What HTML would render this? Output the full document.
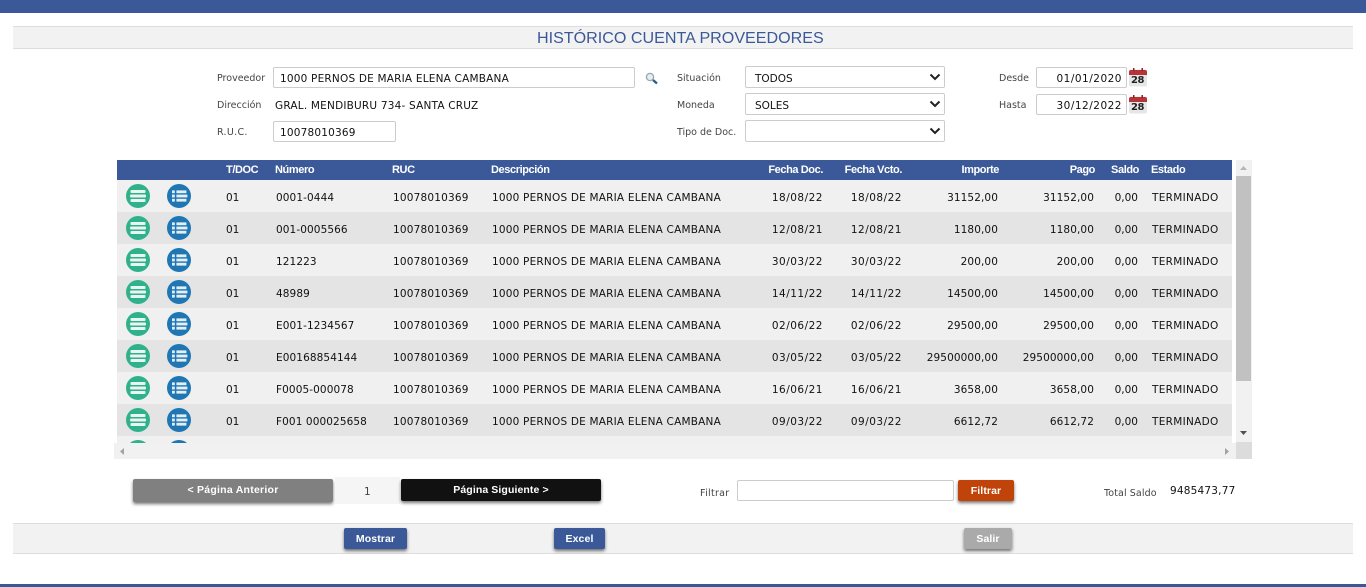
<!DOCTYPE html>
<html lang="es"><head><meta charset="utf-8"><title>Histórico Cuenta Proveedores</title>
<style>
html,body{margin:0;padding:0;background:#fff}
body{position:relative;width:1366px;height:587px;overflow:hidden;font-family:"DejaVu Sans","Liberation Sans",sans-serif;font-size:10.5px;color:#111}
div,span,svg{position:absolute;box-sizing:border-box}
span{white-space:nowrap;line-height:14px}
.bar{left:0;width:1366px;background:#3b5998}
.band{left:13px;width:1340px;background:#f2f2f2;border-top:1px solid #ddd;border-bottom:1px solid #ddd}
.lb{color:#444;font-size:9.5px}
.ls{letter-spacing:.2px}
.inp{background:#fff;border:1px solid #ccc;border-radius:2px}
.sel{background:#fff;border:1px solid #ccc;border-radius:2px;left:745px;width:200px;height:22px}
.chev{left:929px;width:12px;height:8px}
.r{left:0;width:1232px;height:32px;overflow:hidden}
.r span{top:11px}
.o{background:#f0f0f0}.e{background:#e4e4e4}
.a{left:226px}.b{left:276px;letter-spacing:.1px}.c{left:393px;letter-spacing:.2px}.d{left:492px;letter-spacing:.2px}
.f{right:409px;letter-spacing:.5px}.g{right:330px;letter-spacing:.5px}.h{right:234px;letter-spacing:.1px}.i{right:138px;letter-spacing:.1px}.j{right:94px}.k{left:1152px;letter-spacing:.3px}
.r .ic1{left:126px;top:4px;width:24px;height:24px}.r .ic2{left:167px;top:4px;width:24px;height:24px}
.th{color:#fff;font:bold 11px "Liberation Sans",sans-serif;top:163px;letter-spacing:-.4px;line-height:14px}
.btn{color:#fff;font:bold 10.5px/23px "Liberation Sans",sans-serif;text-align:center;box-shadow:0 2px 3px rgba(0,0,0,.55);border-radius:2px;letter-spacing:.1px}
.cn{font:bold 10px/11px "DejaVu Sans",sans-serif;letter-spacing:-.4px;color:#222;left:1131px}
</style></head><body>
<svg width="0" height="0" style="left:0;top:0"><defs>
<symbol id="g" viewBox="0 0 24 24"><circle cx="12" cy="12" r="12" fill="#2fb18c"/><rect x="4.5" y="6" width="15" height="3" rx="1" fill="#e8f5f1"/><rect x="4" y="10.5" width="16" height="3" rx="1" fill="#e8f5f1"/><rect x="4.5" y="15" width="15" height="3" rx="1" fill="#e8f5f1"/></symbol>
<symbol id="l" viewBox="0 0 24 24"><circle cx="12" cy="12" r="12" fill="#1f76b3"/><rect x="5" y="6.4" width="2.8" height="2.8" fill="#e3eff7"/><rect x="5" y="10.6" width="2.8" height="2.8" fill="#e3eff7"/><rect x="5" y="14.8" width="2.8" height="2.8" fill="#e3eff7"/><rect x="9.4" y="6.4" width="10" height="2.8" fill="#e3eff7"/><rect x="9.4" y="10.6" width="11" height="2.8" fill="#e3eff7"/><rect x="9.4" y="14.8" width="10" height="2.8" fill="#e3eff7"/></symbol>
<symbol id="cal" viewBox="0 0 20 19"><rect x="1" y="1.5" width="18" height="17" rx="2" fill="#e6e6e6"/><path d="M1 7V4a2 2 0 0 1 2-2h14a2 2 0 0 1 2 2v3z" fill="#b8323a"/><rect x="5" y="0" width="1.5" height="3" fill="#8a2028"/><rect x="13.5" y="0" width="1.5" height="3" fill="#8a2028"/></symbol>
<symbol id="ch" viewBox="0 0 12 8"><path d="M1.5 1.5L6 6l4.5-4.5" fill="none" stroke="#222" stroke-width="2"/></symbol>
</defs></svg>

<div class="bar" style="top:0;height:13px"></div>
<div class="bar" style="top:584px;height:3px"></div>

<div class="band" style="top:26px;height:23px"></div>
<span style="left:537px;top:29px;font:16.1px/19px 'Liberation Sans',sans-serif;color:#3b5998">HISTÓRICO CUENTA PROVEEDORES</span>

<span class="lb" style="left:217px;top:72px">Proveedor</span>
<div class="inp" style="left:273px;top:67px;width:362px;height:21px"></div>
<span class="ls" style="left:280px;top:72px">1000 PERNOS DE MARIA ELENA CAMBANA</span>
<svg style="left:645px;top:72px" width="14" height="13" viewBox="0 0 14 13"><circle cx="5" cy="5" r="3.6" fill="#e6eef3" stroke="#9aa7ad" stroke-width="1.3"/><path d="M8 8l4 3.5" stroke="#2a5f8a" stroke-width="2.4"/></svg>
<span class="lb" style="left:217px;top:99px">Dirección</span>
<span class="ls" style="left:275px;top:99px">GRAL. MENDIBURU 734- SANTA CRUZ</span>
<span class="lb" style="left:217px;top:126px;letter-spacing:.3px">R.U.C.</span>
<div class="inp" style="left:273px;top:121px;width:123px;height:21px"></div>
<span class="ls" style="left:280px;top:126px">10078010369</span>

<span class="lb" style="left:677px;top:72px">Situación</span>
<div class="sel" style="top:66px"></div><span style="left:755px;top:72px">TODOS</span>
<svg class="chev" style="top:73px"><use href="#ch"/></svg>
<span class="lb" style="left:677px;top:99px">Moneda</span>
<div class="sel" style="top:93px"></div><span style="left:755px;top:99px">SOLES</span>
<svg class="chev" style="top:100px"><use href="#ch"/></svg>
<span class="lb" style="left:677px;top:126px">Tipo de Doc.</span>
<div class="sel" style="top:120px"></div>
<svg class="chev" style="top:127px"><use href="#ch"/></svg>

<span class="lb" style="left:999px;top:72px">Desde</span>
<div class="inp" style="left:1036px;top:67px;width:91px;height:21px"></div>
<span style="right:244px;top:72px;letter-spacing:.5px">01/01/2020</span>
<svg style="left:1128px;top:68px" width="20" height="19"><use href="#cal"/></svg>
<span class="cn" style="top:75px">28</span>
<span class="lb" style="left:999px;top:99px">Hasta</span>
<div class="inp" style="left:1036px;top:94px;width:91px;height:21px"></div>
<span style="right:244px;top:99px;letter-spacing:.5px">30/12/2022</span>
<svg style="left:1128px;top:95px" width="20" height="19"><use href="#cal"/></svg>
<span class="cn" style="top:102px">28</span>

<!-- table -->
<div style="left:117px;top:160px;width:1115px;height:20px;background:#3b5998"></div>
<span class="th" style="left:226px">T/DOC</span>
<span class="th" style="left:275px">Número</span>
<span class="th" style="left:392px">RUC</span>
<span class="th" style="left:491px">Descripción</span>
<span class="th" style="right:543px">Fecha Doc.</span>
<span class="th" style="right:464px">Fecha Vcto.</span>
<span class="th" style="right:367px">Importe</span>
<span class="th" style="right:271px">Pago</span>
<span class="th" style="right:227px">Saldo</span>
<span class="th" style="left:1151px">Estado</span>

<div style="left:117px;top:180px;width:1115px;height:263px;overflow:hidden;background:#f0f0f0">
<div style="left:-117px;top:0;width:1366px;height:263px">
<div class="r o" style="top:0"><svg class="ic1"><use href="#g"/></svg><svg class="ic2"><use href="#l"/></svg><span class="a">01</span><span class="b">0001-0444</span><span class="c">10078010369</span><span class="d">1000 PERNOS DE MARIA ELENA CAMBANA</span><span class="f">18/08/22</span><span class="g">18/08/22</span><span class="h">31152,00</span><span class="i">31152,00</span><span class="j">0,00</span><span class="k">TERMINADO</span></div>
<div class="r e" style="top:32px"><svg class="ic1"><use href="#g"/></svg><svg class="ic2"><use href="#l"/></svg><span class="a">01</span><span class="b">001-0005566</span><span class="c">10078010369</span><span class="d">1000 PERNOS DE MARIA ELENA CAMBANA</span><span class="f">12/08/21</span><span class="g">12/08/21</span><span class="h">1180,00</span><span class="i">1180,00</span><span class="j">0,00</span><span class="k">TERMINADO</span></div>
<div class="r o" style="top:64px"><svg class="ic1"><use href="#g"/></svg><svg class="ic2"><use href="#l"/></svg><span class="a">01</span><span class="b">121223</span><span class="c">10078010369</span><span class="d">1000 PERNOS DE MARIA ELENA CAMBANA</span><span class="f">30/03/22</span><span class="g">30/03/22</span><span class="h">200,00</span><span class="i">200,00</span><span class="j">0,00</span><span class="k">TERMINADO</span></div>
<div class="r e" style="top:96px"><svg class="ic1"><use href="#g"/></svg><svg class="ic2"><use href="#l"/></svg><span class="a">01</span><span class="b">48989</span><span class="c">10078010369</span><span class="d">1000 PERNOS DE MARIA ELENA CAMBANA</span><span class="f">14/11/22</span><span class="g">14/11/22</span><span class="h">14500,00</span><span class="i">14500,00</span><span class="j">0,00</span><span class="k">TERMINADO</span></div>
<div class="r o" style="top:128px"><svg class="ic1"><use href="#g"/></svg><svg class="ic2"><use href="#l"/></svg><span class="a">01</span><span class="b">E001-1234567</span><span class="c">10078010369</span><span class="d">1000 PERNOS DE MARIA ELENA CAMBANA</span><span class="f">02/06/22</span><span class="g">02/06/22</span><span class="h">29500,00</span><span class="i">29500,00</span><span class="j">0,00</span><span class="k">TERMINADO</span></div>
<div class="r e" style="top:160px"><svg class="ic1"><use href="#g"/></svg><svg class="ic2"><use href="#l"/></svg><span class="a">01</span><span class="b">E00168854144</span><span class="c">10078010369</span><span class="d">1000 PERNOS DE MARIA ELENA CAMBANA</span><span class="f">03/05/22</span><span class="g">03/05/22</span><span class="h">29500000,00</span><span class="i">29500000,00</span><span class="j">0,00</span><span class="k">TERMINADO</span></div>
<div class="r o" style="top:192px"><svg class="ic1"><use href="#g"/></svg><svg class="ic2"><use href="#l"/></svg><span class="a">01</span><span class="b">F0005-000078</span><span class="c">10078010369</span><span class="d">1000 PERNOS DE MARIA ELENA CAMBANA</span><span class="f">16/06/21</span><span class="g">16/06/21</span><span class="h">3658,00</span><span class="i">3658,00</span><span class="j">0,00</span><span class="k">TERMINADO</span></div>
<div class="r e" style="top:224px"><svg class="ic1"><use href="#g"/></svg><svg class="ic2"><use href="#l"/></svg><span class="a">01</span><span class="b">F001 000025658</span><span class="c">10078010369</span><span class="d">1000 PERNOS DE MARIA ELENA CAMBANA</span><span class="f">09/03/22</span><span class="g">09/03/22</span><span class="h">6612,72</span><span class="i">6612,72</span><span class="j">0,00</span><span class="k">TERMINADO</span></div>
<div class="r o" style="top:256px"><svg class="ic1"><use href="#g"/></svg><svg class="ic2"><use href="#l"/></svg></div>
</div></div>

<!-- scrollbars -->
<div style="left:114px;top:443px;width:1122px;height:16px;background:#f1f1f1"></div>
<div style="left:1236px;top:160px;width:16px;height:282px;background:#f1f1f1"></div>
<div style="left:1236px;top:176px;width:15px;height:205px;background:#c1c1c1"></div>
<div style="left:1236px;top:442px;width:16px;height:17px;background:#dcdcdc"></div>
<svg style="left:1239px;top:165px" width="9" height="6"><path d="M4.5 1L8 5H1z" fill="#b5b5b5"/></svg>
<svg style="left:1239px;top:430px" width="9" height="6"><path d="M1 1h7L4.5 5z" fill="#505050"/></svg>
<svg style="left:119px;top:447px" width="6" height="9"><path d="M5 1v7L1 4.5z" fill="#a3a3a3"/></svg>
<svg style="left:1224px;top:447px" width="6" height="9"><path d="M1 1v7l4-3.5z" fill="#a3a3a3"/></svg>

<!-- pagination -->
<div class="btn" style="left:133px;top:479px;width:200px;height:23px;background:#808080;letter-spacing:.25px">&lt; Página Anterior</div>
<div style="left:335px;top:477px;width:65px;height:27px;background:#f5f5f5"></div>
<span class="lb" style="left:364px;top:485px;font-size:10.5px">1</span>
<div class="btn" style="left:401px;top:479px;width:200px;height:22px;background:#111">Página Siguiente &gt;</div>

<span class="lb" style="left:700px;top:487px;letter-spacing:.3px">Filtrar</span>
<div class="inp" style="left:737px;top:480px;width:217px;height:21px"></div>
<div class="btn" style="left:958px;top:480px;width:56px;height:21px;background:#c0440a">Filtrar</div>
<span class="lb" style="left:1104px;top:487px;letter-spacing:.1px">Total Saldo</span>
<span class="ls" style="left:1170px;top:484px">9485473,77</span>

<div class="band" style="top:523px;height:31px"></div>
<div class="btn" style="left:344px;top:528px;width:63px;height:21px;background:#3b5998">Mostrar</div>
<div class="btn" style="left:554px;top:528px;width:51px;height:21px;background:#3b5998">Excel</div>
<div class="btn" style="left:964px;top:528px;width:48px;height:21px;background:#aaa">Salir</div>
</body></html>
